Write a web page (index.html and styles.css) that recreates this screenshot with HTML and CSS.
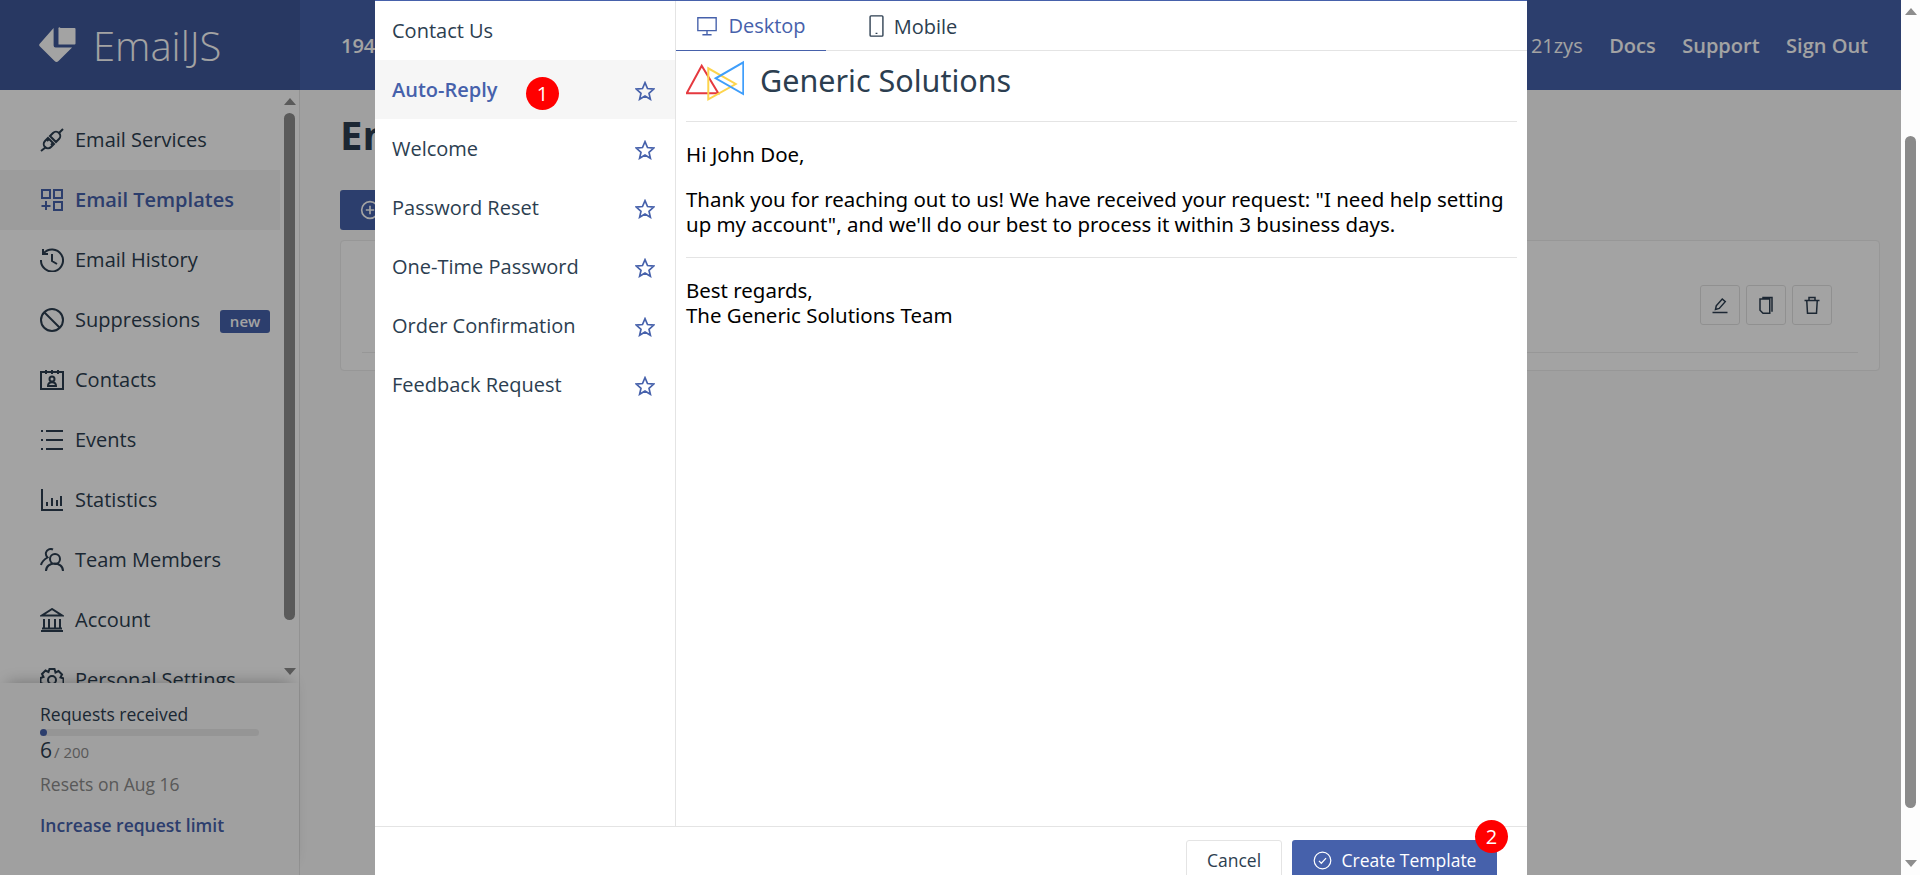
FILE: index.html
```html
<!DOCTYPE html>
<html lang="en">
<head>
<meta charset="UTF-8">
<meta name="viewport" content="width=device-width, initial-scale=1.0">
<title>EmailJS - Email Templates</title>
<link rel="stylesheet" href="styles.css">
</head>
<body>
<div class="page">
    <header class="topbar">
        <div class="brand">
            <svg class="brand-icon" viewBox="0 0 38 38"><path d="M22 1h14.500a1 1 0 0 1 1 1v15a1 1 0 0 1-1 1H20v-16a1 1 0 0 1 2-1z" /><path d="M15 1v18a2 2 0 0 0 2 2h17l-14 14a3 3 0 0 1-4 0L1 20a2 2 0 0 1 0-3z" /></svg>
            <span class="brand-name">EmailJS</span>
        </div>
        <nav class="topnav">
            <span class="account">1942521zys</span>
            <span class="nav-right">
                <span class="user">21zys</span>
                <a>Docs</a>
                <a>Support</a>
                <a>Sign Out</a>
            </span>
        </nav>
    </header>
    <div class="layout">
        <aside class="sidebar">
            <div class="side-scroll">
                <ul class="side-menu">
                    <li><svg viewBox="0 0 24 24"><path d="M1 23l5-4M23 1l-4 4M9 11l-2 2M13 15l-2 2" /><path d="M8 10l6 6-3 3a4 4 0 0 1-6-6zM10 8l6 6 3-3a4 4 0 0 0-6-6z" /></svg>Email Services</li>
                    <li class="active"><svg viewBox="0 0 24 24"><path d="M2 2h8v8H2zM14 2h8v8h-8zM14 14h8v8h-8zM6 13v9M1.500 18h9" /></svg>Email Templates</li>
                    <li><svg viewBox="0 0 24 24"><path d="M3.500 5.500A11 11 0 1 1 1 12M3 1v5h5M12 6v7l5 3" /></svg>Email History</li>
                    <li><svg viewBox="0 0 24 24"><circle cx="12" cy="12" r="11" /><path d="M4.500 4.500l15 15" /></svg>Suppressions<span class="badge-new">new</span></li>
                    <li><svg viewBox="0 0 24 24"><path d="M1 4h22v17H1zM6 2v4M12 2v4M18 2v4M9.500 11a2.500 2.500 0 1 0 5 0 2.500 2.500 0 1 0-5 0M8 18c0-5 8-5 8 0z" /></svg>Contacts</li>
                    <li><svg viewBox="0 0 24 24"><path d="M6 3h17M6 12h17M6 21h17M1 3h2M1 12h2M1 21h2" /></svg>Events</li>
                    <li><svg viewBox="0 0 24 24"><path d="M2 1v21h21M7 18v-4M12 18v-8M17 18v-6M21 18V8" /></svg>Statistics</li>
                    <li><svg viewBox="0 0 24 24"><path d="M10 11a5 5 0 1 0 10 0 5 5 0 1 0-10 0M6 23c0-10 17-10 17 0M13 1.500a5 5 0 0 0-7 3c-.5 2 .5 4 1.500 5C5 11 2 13 1 17" /></svg>Team Members</li>
                    <li><svg viewBox="0 0 24 24"><path d="M12 1L2 7.500h20zM4 11v9M9 11v9M15 11v9M20 11v9M1 23h22M2 20.500h20" /></svg>Account</li>
                    <li><svg viewBox="0 0 24 24"><circle cx="12" cy="12" r="4" /><path d="M9.500 1h5l1 3.500 3-1.500 3.500 3.500-1.500 3 3 1v5l-3 1 1.500 3-3.500 3.500-3-1.500-1 3h-5l-1-3-3 1.500L2 19l1.500-3-3-1V10l3-1L2 6l3.500-3.500 3 1.500z" /></svg>Personal Settings</li>
                </ul>
                <div class="side-track">
                    <span class="arrow-up"></span>
                    <span class="side-thumb"></span>
                    <span class="arrow-down"></span>
                </div>
            </div>
            <div class="usage">
                <div class="usage-title">Requests received</div>
                <div class="usage-bar"><span class="usage-fill"></span></div>
                <div class="usage-count">6<small>/ 200</small></div>
                <div class="usage-reset">Resets on Aug 16</div>
                <a class="usage-link">Increase request limit</a>
            </div>
        </aside>
        <main class="content">
            <h1>Email Templates</h1>
            <button class="new-btn"><svg viewBox="0 0 24 24"><circle cx="12" cy="12" r="10" /><path d="M12 7v10M7 12h10" /></svg>Create New Template</button>
            <section class="card">
                <div class="card-row">
                    <span class="tool"><svg viewBox="0 0 24 24"><path d="M2 22h20M6 18l1-5 8-9 4 3.500-8 9z" /></svg></span>
                    <span class="tool"><svg viewBox="0 0 24 24"><path d="M4 4h13v19H8l-4-4zM7 2h13v19" /></svg></span>
                    <span class="tool"><svg viewBox="0 0 24 24"><path d="M2 6h20M5 6l1 17h12l1-17M8 6V2h8v4" /></svg></span>
                </div>
            </section>
        </main>
    </div>
</div>

<div class="overlay"></div>
<div class="page-track">
    <span class="arrow-up"></span>
    <span class="page-thumb"></span>
    <span class="arrow-down"></span>
</div>

<div class="modal">
    <div class="modal-body">
        <ul class="tpl-list">
            <li>Contact Us</li>
            <li class="active">Auto-Reply<span class="marker marker-one">1</span><svg class="star" viewBox="0 0 24 24"><path d="M12 2l3 7 7.500.7-5.700 5 1.700 7.300-6.500-3.900L5.500 22l1.700-7.300-5.700-5L9 9z" /></svg></li>
            <li>Welcome<svg class="star" viewBox="0 0 24 24"><path d="M12 2l3 7 7.500.7-5.700 5 1.700 7.300-6.500-3.900L5.500 22l1.700-7.300-5.700-5L9 9z" /></svg></li>
            <li>Password Reset<svg class="star" viewBox="0 0 24 24"><path d="M12 2l3 7 7.500.7-5.700 5 1.700 7.300-6.500-3.900L5.500 22l1.700-7.300-5.700-5L9 9z" /></svg></li>
            <li>One-Time Password<svg class="star" viewBox="0 0 24 24"><path d="M12 2l3 7 7.500.7-5.700 5 1.700 7.300-6.500-3.900L5.500 22l1.700-7.300-5.700-5L9 9z" /></svg></li>
            <li>Order Confirmation<svg class="star" viewBox="0 0 24 24"><path d="M12 2l3 7 7.500.7-5.700 5 1.700 7.300-6.500-3.900L5.500 22l1.700-7.300-5.700-5L9 9z" /></svg></li>
            <li>Feedback Request<svg class="star" viewBox="0 0 24 24"><path d="M12 2l3 7 7.500.7-5.700 5 1.700 7.300-6.500-3.900L5.500 22l1.700-7.300-5.700-5L9 9z" /></svg></li>
        </ul>
        <div class="preview">
            <div class="tabs">
                <div class="tab tab-active"><svg viewBox="0 0 24 24"><path d="M2 3h20v14H2zM12 17v4M7 21.500h10" /></svg>Desktop</div>
                <div class="tab tab-mobile"><svg class="tab-phone" viewBox="0 0 16 24"><path d="M2 1h12a1 1 0 0 1 1 1v20a1 1 0 0 1-1 1H2a1 1 0 0 1-1-1V2a1 1 0 0 1 1-1zM7 20h2" /></svg>Mobile</div>
            </div>
            <div class="mail">
                <div class="mail-head">
                    <svg class="mail-logo" viewBox="0 0 58 41">
                        <path class="tri-red" d="M15.700 5.700L.7 33.300h31.600z" />
                        <path class="tri-yellow" d="M22.300 8.300v31l27.400-15.300z" />
                        <path class="tri-blue" d="M57.300 2.300V34L29.700 18.300z" />
                    </svg>
                    <span class="mail-company">Generic Solutions</span>
                </div>
                <div class="mail-text">
                    <p>Hi John Doe,</p>
                    <p>Thank you for reaching out to us! We have received your request: "I need help setting up my account", and we'll do our best to process it within 3 business days.</p>
                </div>
                <div class="mail-sign">
                    <p>Best regards,<br>The Generic Solutions Team</p>
                </div>
            </div>
        </div>
    </div>
    <div class="modal-foot">
        <button class="btn-cancel">Cancel</button>
        <button class="btn-create"><svg viewBox="0 0 24 24"><circle cx="12" cy="12" r="10.500" /><path d="M7.500 12.500l3 3 6-6.500" /></svg>Create Template<span class="marker marker-two">2</span></button>
    </div>
</div>
</body>
</html>
```

FILE: styles.css
```css
* {
    box-sizing: border-box;
}
html, body {
    height: 100%;
}
body {
    margin: 0;
    overflow: hidden;
    font-family: "Open Sans", sans-serif;
    color: #2c3e50;
    background-color: #fafafa;
}
ul {
    list-style: none;
    margin: 0;
    padding: 0;
}
svg {
    fill: none;
    stroke: currentColor;
    stroke-width: 2;
    flex-shrink: 0;
}
button {
    font-family: inherit;
    border: none;
}

.page {
    height: 875px;
    overflow: hidden;
    display: flex;
    flex-direction: column;
}
.topbar {
    height: 90px;
    display: flex;
    background-color: #4661ab;
    color: #fff;
    flex-shrink: 0;
}
.brand {
    width: 300px;
    display: flex;
    align-items: center;
    padding-left: 39px;
    background-color: #3f589a;
}
.brand-icon {
    width: 37px;
    height: 37px;
    fill: #fff;
    stroke: none;
}
.brand-name {
    margin-left: 17px;
    font-size: 40px;
    font-weight: 300;
}
.topnav {
    flex: 1;
    display: flex;
    align-items: center;
    justify-content: space-between;
    padding: 0 52px 0 41px;
    font-size: 20px;
    font-weight: 600;
}
.nav-right {
    display: flex;
    gap: 26.500px;
}
.user {
    font-weight: 400;
}

.layout {
    flex: 1;
    display: flex;
    min-height: 0;
}
.sidebar {
    width: 300px;
    flex-shrink: 0;
    display: flex;
    flex-direction: column;
    background-color: #fff;
    border-right: 1px solid #e4e4e4;
}
.side-scroll {
    height: 593px;
    display: flex;
    padding-top: 20px;
    overflow: hidden;
}
.side-menu {
    width: 280px;
    flex-shrink: 0;
}
.side-menu li {
    height: 60px;
    display: flex;
    align-items: center;
    padding: 0 0 1px 40px;
    font-size: 20px;
    white-space: nowrap;
}
.side-menu li svg {
    width: 24px;
    height: 24px;
    margin-right: 11px;
}
.side-menu .active {
    background-color: #f5f5f5;
    color: #4661ab;
    font-weight: 600;
}
.badge-new {
    width: 50px;
    height: 23px;
    margin: 4px 0 0 20px;
    line-height: 22px;
    text-align: center;
    font-size: 15px;
    font-weight: 600;
    color: #fff;
    background-color: #4661ab;
    border-radius: 3px;
}
.side-track {
    width: 19px;
    margin-top: -20px;
    display: flex;
    flex-direction: column;
    align-items: center;
    padding-top: 8px;
}
.side-thumb {
    width: 11px;
    height: 507px;
    margin: 8px 0 48px;
    flex-shrink: 0;
    border-radius: 6px;
    background-color: #8d8d8d;
}
.arrow-up, .arrow-down {
    width: 0;
    height: 0;
    flex-shrink: 0;
    border-left: 6.500px solid transparent;
    border-right: 6.500px solid transparent;
}
.arrow-up {
    border-bottom: 7px solid #8d8d8d;
}
.arrow-down {
    border-top: 7px solid #8d8d8d;
}
.usage {
    flex: 1;
    padding: 19px 0 0 40px;
    background-color: #fafafa;
    position: relative;
    box-shadow: 0 -8px 14px -8px rgba(0, 0, 0, 0.3);
    font-size: 17.500px;
}
.usage-title {
    line-height: 24px;
}
.usage-bar {
    width: 219px;
    height: 7px;
    margin-top: 3px;
    border-radius: 4px;
    background-color: #e9e9e9;
}
.usage-fill {
    display: block;
    width: 7px;
    height: 7px;
    border-radius: 50%;
    background-color: #4661ab;
}
.usage-count {
    margin-top: 1px;
    font-size: 21px;
    line-height: 27px;
}
.usage-count small {
    margin-left: 2px;
    font-size: 15px;
    color: #8b8b8b;
}
.usage-reset {
    margin-top: 2px;
    line-height: 32px;
    color: #8b8b8b;
}
.usage-link {
    display: block;
    margin-top: 9px;
    font-weight: 600;
    line-height: 32px;
    color: #4661ab;
}

.content {
    flex: 1;
    padding: 20px 40px 0 40px;
    min-width: 0;
}
.content h1 {
    margin: 0;
    font-size: 40px;
    line-height: 50px;
    font-weight: 700;
}
.new-btn {
    display: flex;
    align-items: center;
    gap: 8px;
    height: 40px;
    margin-top: 30px;
    padding: 0 20px;
    border-radius: 3px;
    font-size: 18px;
    color: #fff;
    background-color: #4661ab;
}
.new-btn svg {
    width: 20px;
    height: 20px;
}
.card {
    height: 131px;
    margin-top: 10px;
    padding: 0 21px;
    border: 1px solid #ececec;
    border-radius: 4px;
    background-color: #fff;
}
.card-row {
    height: 112px;
    padding: 44px 26px 0 0;
    display: flex;
    justify-content: flex-end;
    gap: 6px;
    border-bottom: 1px solid #ececec;
}
.tool {
    width: 40px;
    height: 40px;
    display: flex;
    align-items: center;
    justify-content: center;
    border: 1px solid #e2e2e2;
    border-radius: 3px;
}
.tool svg {
    width: 18px;
    height: 18px;
}

.overlay {
    position: fixed;
    inset: 0;
    background-color: rgba(0, 0, 0, 0.36);
}
.page-track {
    position: fixed;
    top: 0;
    right: 0;
    bottom: 0;
    width: 19px;
    background-color: #fdfdfd;
    display: flex;
    flex-direction: column;
    align-items: center;
    padding-top: 8px;
}
.page-thumb {
    width: 11px;
    height: 672px;
    margin: 121px 0 52px;
    flex-shrink: 0;
    border-radius: 6px;
    background-color: #8a8a8a;
}

.modal {
    position: fixed;
    top: 0;
    left: 375px;
    width: 1152px;
    height: 900px;
    display: flex;
    flex-direction: column;
    background-color: #fff;
    border-top: 1px solid #4661ab;
}
.modal-body {
    height: 825px;
    display: flex;
}
.tpl-list {
    width: 301px;
    flex-shrink: 0;
    border-right: 1px solid #e4e4e4;
}
.tpl-list li {
    position: relative;
    height: 59px;
    display: flex;
    align-items: center;
    justify-content: space-between;
    padding: 0 20px 0 17px;
    font-size: 20px;
}
.tpl-list .active {
    background-color: #f6f6f6;
    color: #4661ab;
    font-weight: 600;
}
.star {
    width: 20px;
    height: 20px;
    margin-top: 3px;
    color: #4661ab;
}
.marker {
    position: absolute;
    width: 33px;
    height: 33px;
    border-radius: 50%;
    background-color: #ff0000;
    color: #fff;
    font-size: 20px;
    font-weight: 400;
    line-height: 33px;
    text-align: center;
}
.marker-one {
    left: 151px;
    top: 17px;
}
.marker-two {
    right: -11px;
    top: -20px;
}
.preview {
    flex: 1;
    min-width: 0;
}
.tabs {
    height: 50px;
    display: flex;
    border-bottom: 1px solid #e4e4e4;
}
.tab {
    width: 150px;
    height: 50px;
    display: flex;
    align-items: center;
    justify-content: center;
    gap: 10px;
    font-size: 20px;
}
.tab svg {
    width: 22px;
    height: 22px;
    stroke-width: 1.500;
}
.tab .tab-phone {
    width: 15px;
}
.tab-mobile {
    width: 174px;
}
.tab-active {
    color: #4661ab;
    border-bottom: 1px solid #4661ab;
}
.mail {
    padding: 0 10px;
    font-family: "Noto Sans", sans-serif;
    font-size: 20.450px;
    line-height: 25px;
    color: #000;
}
.mail p {
    margin: 0 0 20px;
}
.mail-head {
    height: 71px;
    padding-bottom: 11px;
    display: flex;
    align-items: center;
    border-bottom: 1px solid #e4e4e4;
}
.mail-logo {
    width: 58px;
    height: 41px;
    margin-right: 16px;
}
.tri-red {
    stroke: #e5393f;
}
.tri-yellow {
    stroke: #fdd44c;
}
.tri-blue {
    stroke: #3f9efb;
}
.mail-company {
    font-size: 30.500px;
    color: #2c3e50;
}
.mail-text {
    height: 136px;
    padding-top: 20px;
    border-bottom: 1px solid #e4e4e4;
}
.mail-sign {
    padding-top: 20px;
}
.modal-foot {
    flex: 1;
    display: flex;
    justify-content: flex-end;
    gap: 10px;
    padding: 13px 30px 0 0;
    border-top: 1px solid #e4e4e4;
}
.modal-foot button {
    height: 40px;
    border-radius: 3px;
    font-size: 17.500px;
}
.btn-cancel {
    width: 96px;
    color: #2c3e50;
    background-color: #fff;
    border: 1px solid #e4e4e4;
}
.btn-create {
    position: relative;
    width: 205px;
    display: flex;
    align-items: center;
    justify-content: center;
    gap: 10px;
    color: #fff;
    background-color: #4661ab;
}
.btn-create svg {
    width: 19px;
    height: 19px;
    stroke-width: 1.500;
}
```
